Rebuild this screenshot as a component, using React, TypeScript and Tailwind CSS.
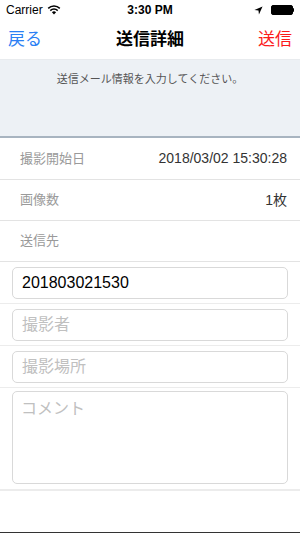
import React from "react"

const font = { fontFamily: '"Liberation Sans", "Noto Sans CJK JP", sans-serif' }

function StatusBar() {
  return (
    <div className="relative flex h-[20px] items-center justify-between px-[6px] text-[12px] text-black">
      <div className="flex items-center gap-[4px]">
        <span>Carrier</span>
        <svg width="14" height="10" viewBox="0 0 14 10">
          <path d="M7 9.5 L4.9 7.2 A3 3 0 0 1 9.1 7.2 Z" fill="#000" />
          <path d="M3.3 5.6 A5.3 5.3 0 0 1 10.7 5.6" stroke="#000" strokeWidth="1.5" fill="none" />
          <path d="M1.2 3.4 A8.3 8.3 0 0 1 12.8 3.4" stroke="#000" strokeWidth="1.5" fill="none" />
        </svg>
      </div>
      <span className="absolute left-1/2 -translate-x-1/2 font-bold">3:30 PM</span>
      <div className="flex items-center gap-[8px]">
        <svg width="9" height="9" viewBox="0 0 10 10">
          <path d="M9.5 0.5 L0.5 4.5 L5 5 L5.5 9.5 Z" fill="#000" />
        </svg>
        <div className="flex items-center">
          <div className="h-[10px] w-[22px] rounded-[2px] border border-black bg-black" />
          <div className="h-[4px] w-[1.5px] rounded-r-sm bg-black" />
        </div>
      </div>
    </div>
  )
}

function NavBar() {
  return (
    <div className="relative flex h-[40px] items-center justify-between border-b border-[#e8ebee] px-[8px] text-[17px]">
      <span className="text-[#2b80f4]">戻る</span>
      <span className="absolute left-1/2 -translate-x-1/2 font-semibold text-black">送信詳細</span>
      <span className="text-[#fc1b1b]">送信</span>
    </div>
  )
}

function InfoRow({ label, value, first }: { label: string; value?: string; first?: boolean }) {
  return (
    <div
      className={`flex items-center justify-between border-b border-[#e3e3e3] pl-[20px] pr-[13px] ${first ? "h-[42px]" : "h-[41px]"}`}
    >
      <span className="text-[13px] text-[#9a9a9a]">{label}</span>
      {value && <span className="text-[14px] text-[#333]">{value}</span>}
    </div>
  )
}

function InputRow({ value, placeholder }: { value?: string; placeholder?: string }) {
  return (
    <div className="flex h-[42px] items-center border-b border-[#ececec] px-[12px]">
      <div className="flex h-[32px] w-full items-center rounded-[5px] border border-[#d9d9d9] px-[9px] text-[16px]">
        {value ? <span className="text-black">{value}</span> : <span className="text-[#c0c0c0]">{placeholder}</span>}
      </div>
    </div>
  )
}

export default function App() {
  return (
    <div className="flex h-[533px] w-[300px] flex-col bg-white" style={font}>
      <StatusBar />
      <NavBar />

      {/* message panel */}
      <div className="h-[78px] border-b-2 border-[#a8b4c0] bg-[#edf1f5] pt-[11px] text-center text-[11px] text-[#555]">
        送信メール情報を入力してください。
      </div>

      <InfoRow label="撮影開始日" value="2018/03/02 15:30:28" first />
      <InfoRow label="画像数" value="1枚" />
      <InfoRow label="送信先" />

      <InputRow value="201803021530" />
      <InputRow placeholder="撮影者" />
      <InputRow placeholder="撮影場所" />

      <div className="h-[103px] border-b-2 border-[#ececec] px-[12px] pt-[3px]">
        <div className="h-[93px] rounded-[5px] border border-[#d9d9d9] px-[8px] pt-[5px] text-[16px] text-[#c0c0c0]">
          コメント
        </div>
      </div>

      <div className="flex-1" />
      <div className="h-[1px] bg-[#333]" />
    </div>
  )
}
